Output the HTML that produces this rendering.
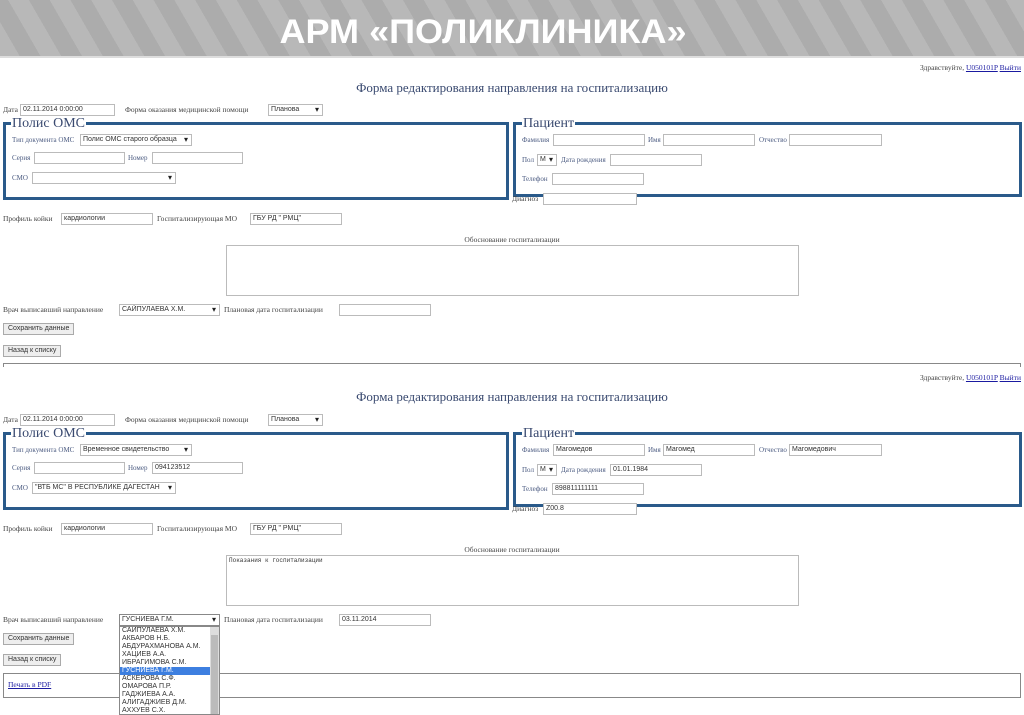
<!DOCTYPE html>
<html><head><meta charset="utf-8"><style>
*{margin:0;padding:0;box-sizing:border-box}
body{width:1024px;height:715px;overflow:hidden;background:#fff;position:relative;font-family:"Liberation Serif",serif;color:#333}
.a{position:absolute;white-space:nowrap}
.l{position:absolute;white-space:nowrap;font-size:7.5px;line-height:10px;color:#444}
.lb{color:#4a5a80;font-size:7px}
.i{position:absolute;border:1px solid #bbb;background:#fff;height:12px;font:7px/10px "Liberation Sans",sans-serif;color:#333;padding-left:2px;white-space:nowrap;overflow:hidden}
.s:after{content:"▾";position:absolute;right:3px;top:0;font-size:8px;color:#222}
.fs{position:absolute;border:3px solid #2a5a8a}
.lg{position:absolute;background:#fff;font-size:14px;line-height:14px;color:#3a4a70;padding:0 1px}
.t{position:absolute;left:0;width:1024px;text-align:center;font-size:13px;color:#3a4a70}
.btn{position:absolute;border:1px solid #aaa;background:#eee;font:7px/10px "Liberation Sans",sans-serif;color:#333;height:12px;padding:0 4px}
a{color:#1a1aa0}
</style></head><body>
<div class="a" style="left:0;top:0;width:1024px;height:58px;background:repeating-linear-gradient(60deg,#b8b8b8 0 18px,#acacac 18px 36px);"></div>
<div class="a" style="left:0;top:56px;width:1024px;height:2px;background:#ddd"></div>
<div class="a" style="left:0;top:12px;width:966px;text-align:center;font:bold 34px/40px 'Liberation Sans',sans-serif;color:#fff;transform:scaleX(1.06)">АРМ «ПОЛИКЛИНИКА»</div>

<!-- Section 1 -->
<div class="l" style="right:3px;top:63px">Здравствуйте, <a href="#">U050101P</a> <a href="#">Выйти</a></div>
<div class="t" style="top:80px">Форма редактирования направления на госпитализацию</div>
<div class="l" style="left:3px;top:105px">Дата</div><div class="i" style="left:20px;top:104px;width:95px">02.11.2014 0:00:00</div>
<div class="l" style="left:125px;top:105px">Форма оказания медицинской помощи</div><div class="i s" style="left:268px;top:104px;width:55px">Планова</div>
<div class="fs" style="left:3px;top:122px;width:506px;height:78px"></div>
<div class="lg" style="left:11px;top:117px">Полис ОМС</div>
<div class="l lb" style="left:12px;top:135px">Тип документа ОМС</div><div class="i s" style="left:80px;top:134px;width:112px">Полис ОМС старого образца</div>
<div class="l lb" style="left:12px;top:153px">Серия</div><div class="i" style="left:34px;top:152px;width:91px"></div>
<div class="l lb" style="left:128px;top:153px">Номер</div><div class="i" style="left:152px;top:152px;width:91px"></div>
<div class="l lb" style="left:12px;top:173px">СМО</div><div class="i s" style="left:32px;top:172px;width:144px"></div>
<div class="fs" style="left:513px;top:122px;width:509px;height:75px"></div>
<div class="lg" style="left:522px;top:117px">Пациент</div>
<div class="l lb" style="left:522px;top:135px">Фамилия</div><div class="i" style="left:553px;top:134px;width:92px"></div>
<div class="l lb" style="left:648px;top:135px">Имя</div><div class="i" style="left:663px;top:134px;width:92px"></div>
<div class="l lb" style="left:759px;top:135px">Отчество</div><div class="i" style="left:789px;top:134px;width:93px"></div>
<div class="l lb" style="left:522px;top:155px">Пол</div><div class="i s" style="left:537px;top:154px;width:20px">M</div>
<div class="l lb" style="left:561px;top:155px">Дата рождения</div><div class="i" style="left:610px;top:154px;width:92px"></div>
<div class="l lb" style="left:522px;top:174px">Телефон</div><div class="i" style="left:552px;top:173px;width:92px"></div>
<div class="l" style="left:512px;top:194px">Диагноз</div><div class="i" style="left:543px;top:193px;width:94px"></div>
<div class="l" style="left:3px;top:214px">Профиль койки</div><div class="i" style="left:61px;top:213px;width:92px">кардиологии</div>
<div class="l" style="left:157px;top:214px">Госпитализирующая МО</div><div class="i" style="left:250px;top:213px;width:92px">ГБУ РД " РМЦ"</div>
<div class="l" style="left:0;width:1024px;text-align:center;top:235px">Обоснование госпитализации</div>
<div class="i" style="left:226px;top:245px;width:573px;height:51px"></div>
<div class="l" style="left:3px;top:305px">Врач выписавший направление</div><div class="i s" style="left:119px;top:304px;width:101px">САЙПУЛАЕВА Х.М.</div>
<div class="l" style="left:224px;top:305px">Плановая дата госпитализации</div><div class="i" style="left:339px;top:304px;width:92px"></div>
<div class="btn" style="left:3px;top:323px">Сохранить данные</div>
<div class="btn" style="left:3px;top:345px">Назад к списку</div>
<div class="a" style="left:3px;top:363px;width:1018px;height:4px;border:1px solid #888;border-bottom:none"></div>

<!-- Section 2 -->
<div class="l" style="right:3px;top:373px">Здравствуйте, <a href="#">U050101P</a> <a href="#">Выйти</a></div>
<div class="t" style="top:389px">Форма редактирования направления на госпитализацию</div>
<div class="l" style="left:3px;top:415px">Дата</div><div class="i" style="left:20px;top:414px;width:95px">02.11.2014 0:00:00</div>
<div class="l" style="left:125px;top:415px">Форма оказания медицинской помощи</div><div class="i s" style="left:268px;top:414px;width:55px">Планова</div>
<div class="fs" style="left:3px;top:432px;width:506px;height:78px"></div>
<div class="lg" style="left:11px;top:427px">Полис ОМС</div>
<div class="l lb" style="left:12px;top:445px">Тип документа ОМС</div><div class="i s" style="left:80px;top:444px;width:112px">Временное свидетельство</div>
<div class="l lb" style="left:12px;top:463px">Серия</div><div class="i" style="left:34px;top:462px;width:91px"></div>
<div class="l lb" style="left:128px;top:463px">Номер</div><div class="i" style="left:152px;top:462px;width:91px">094123512</div>
<div class="l lb" style="left:12px;top:483px">СМО</div><div class="i s" style="left:32px;top:482px;width:144px">"ВТБ МС" В РЕСПУБЛИКЕ ДАГЕСТАН</div>
<div class="fs" style="left:513px;top:432px;width:509px;height:75px"></div>
<div class="lg" style="left:522px;top:427px">Пациент</div>
<div class="l lb" style="left:522px;top:445px">Фамилия</div><div class="i" style="left:553px;top:444px;width:92px">Магомедов</div>
<div class="l lb" style="left:648px;top:445px">Имя</div><div class="i" style="left:663px;top:444px;width:92px">Магомед</div>
<div class="l lb" style="left:759px;top:445px">Отчество</div><div class="i" style="left:789px;top:444px;width:93px">Магомедович</div>
<div class="l lb" style="left:522px;top:465px">Пол</div><div class="i s" style="left:537px;top:464px;width:20px">M</div>
<div class="l lb" style="left:561px;top:465px">Дата рождения</div><div class="i" style="left:610px;top:464px;width:92px">01.01.1984</div>
<div class="l lb" style="left:522px;top:484px">Телефон</div><div class="i" style="left:552px;top:483px;width:92px">898811111111</div>
<div class="l" style="left:512px;top:504px">Диагноз</div><div class="i" style="left:543px;top:503px;width:94px">Z00.8</div>
<div class="l" style="left:3px;top:524px">Профиль койки</div><div class="i" style="left:61px;top:523px;width:92px">кардиологии</div>
<div class="l" style="left:157px;top:524px">Госпитализирующая МО</div><div class="i" style="left:250px;top:523px;width:92px">ГБУ РД " РМЦ"</div>
<div class="l" style="left:0;width:1024px;text-align:center;top:545px">Обоснование госпитализации</div>
<div class="i" style="left:226px;top:555px;width:573px;height:51px;font-family:'Liberation Mono',monospace;font-size:6px">Показания к госпитализации</div>
<div class="l" style="left:3px;top:615px">Врач выписавший направление</div><div class="i s" style="left:119px;top:614px;width:101px;border-color:#888">ГУСНИЕВА Г.М.</div>
<div class="l" style="left:224px;top:615px">Плановая дата госпитализации</div><div class="i" style="left:339px;top:614px;width:92px">03.11.2014</div>
<div class="btn" style="left:3px;top:633px">Сохранить данные</div>
<div class="btn" style="left:3px;top:654px">Назад к списку</div>
<div class="a" style="left:3px;top:673px;width:1018px;height:25px;border:1px solid #888"></div>
<div class="l" style="left:8px;top:680px"><a href="#">Печать в PDF</a></div>
<div class="a" style="left:119px;top:626px;width:101px;height:89px;border:1px solid #888;background:#fff;font:7px/8px 'Liberation Sans',sans-serif;color:#333;overflow:hidden">
<div style="position:absolute;right:0;top:0;width:9px;height:89px;background:#ddd"><div style="margin:8px 1px 0;height:81px;background:#bbb"></div></div>
<div style="padding-left:2px">САЙПУЛАЕВА Х.М.<br>АКБАРОВ Н.Б.<br>АБДУРАХМАНОВА А.М.<br>ХАЦИЕВ А.А.<br>ИБРАГИМОВА С.М.</div>
<div style="background:#3d7fe0;color:#fff;width:91px;padding-left:2px">ГУСНИЕВА Г.М.</div>
<div style="padding-left:2px">АСКЕРОВА С.Ф.<br>ОМАРОВА П.Р.<br>ГАДЖИЕВА А.А.<br>АЛИГАДЖИЕВ Д.М.<br>АХХУЕВ С.Х.<br>МАГОМЕДОВА Н.М.</div>
</div>
</body></html>
